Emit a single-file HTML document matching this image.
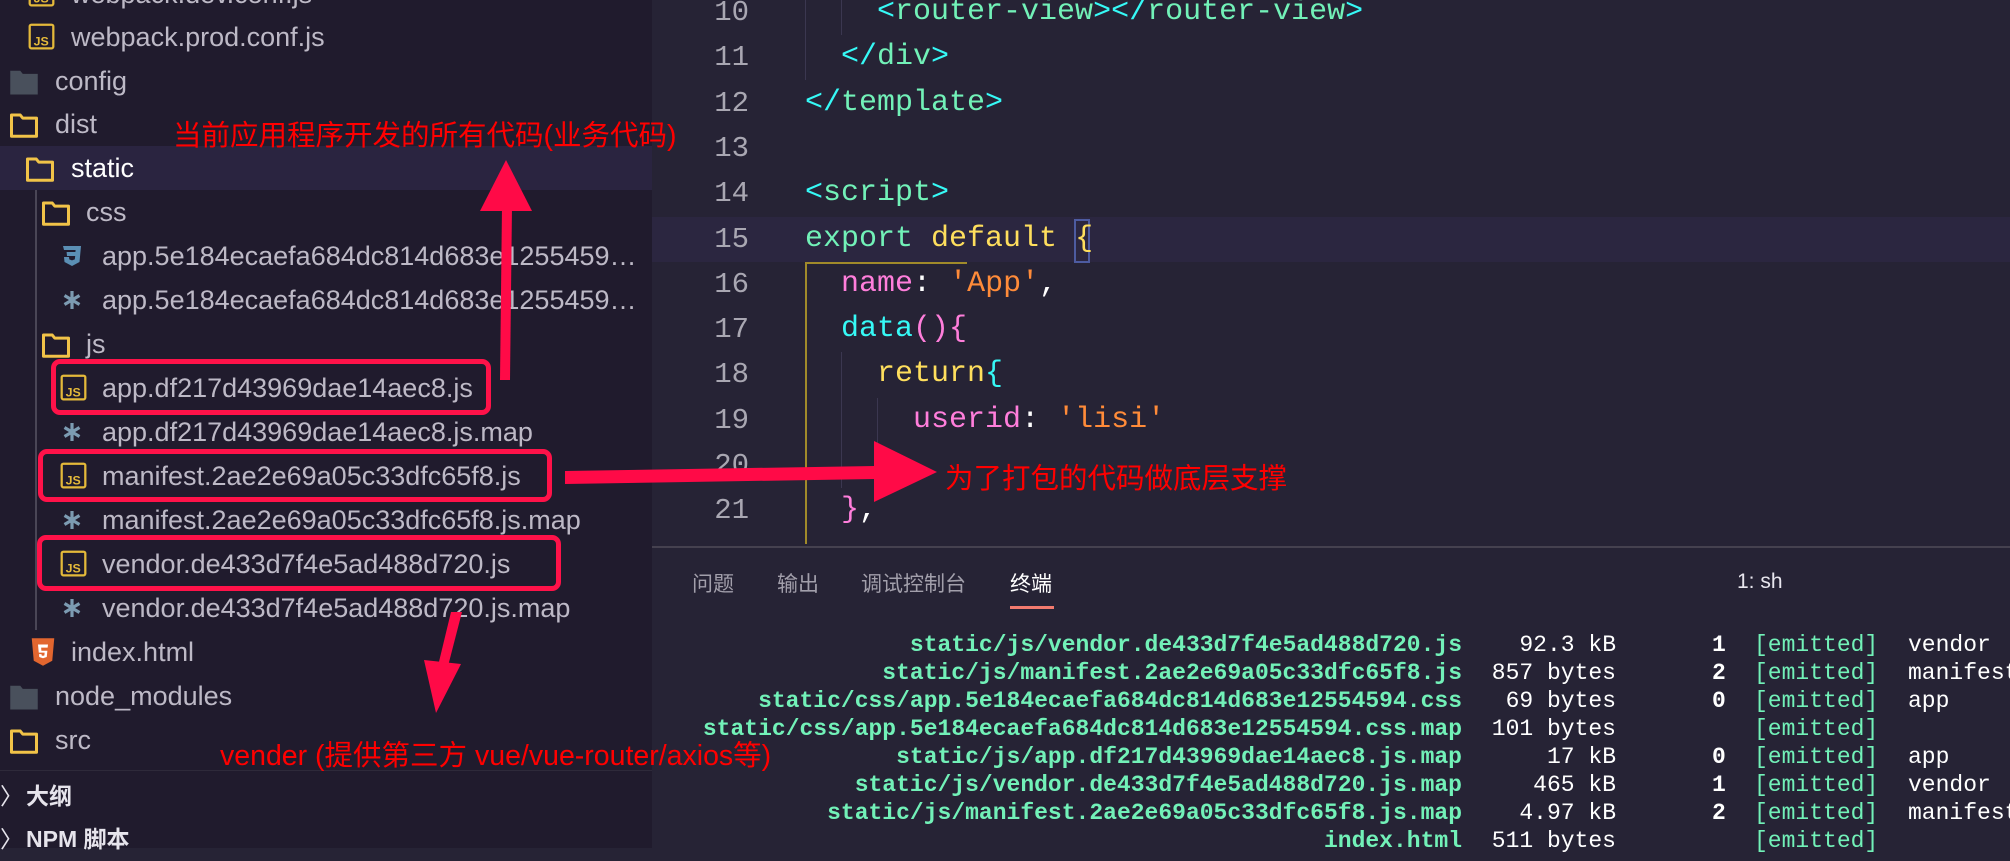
<!DOCTYPE html>
<html><head><meta charset="utf-8"><style>
*{margin:0;padding:0;box-sizing:border-box}
body{width:2010px;height:848px;overflow:hidden;background:#262335;position:relative;font-family:"Liberation Sans","Noto Sans CJK SC",sans-serif}
.sb{position:absolute;left:0;top:0;width:652px;height:848px;background:#201b2d}
.row{position:absolute;left:0;width:652px;height:44px;line-height:44px;font-size:27px;color:#bdb9c6;white-space:nowrap}
.row span.t{position:absolute;top:0}
.ic{position:absolute;top:8px}
.ln{position:absolute;left:652px;width:97px;text-align:right;font-family:"Liberation Mono",monospace;font-size:29px;color:#a9a7b2;line-height:45px;height:45px}
.cl{position:absolute;left:805px;font-family:"Liberation Mono",monospace;font-size:30px;line-height:45px;height:45px;white-space:pre;color:#72f1b8}
.term{position:absolute;font-family:"Liberation Mono",monospace;font-size:23px;font-weight:bold;line-height:28px;white-space:pre}
.red{position:absolute;color:#ff0000;font-size:28.5px;white-space:nowrap;font-family:"Liberation Sans","Noto Sans CJK SC",sans-serif}
.box{position:absolute;border:5px solid #ff1249;border-radius:9px}
.ell{overflow:hidden;text-overflow:ellipsis;width:543px}
</style></head><body>
<div class="sb"></div>
<div style="position:absolute;left:0;top:146px;width:652px;height:44px;background:#2a2440"></div>
<div style="position:absolute;left:35px;top:190px;width:2px;height:440px;background:#4a4656"></div>

<svg width="0" height="0" style="position:absolute">
<defs>
<symbol id="js" viewBox="0 0 24 24"><rect x="1.5" y="1.5" width="21" height="21" rx="1.5" fill="none" stroke="#e4b93a" stroke-width="2"/><text x="5" y="20" font-family="Liberation Sans" font-size="11" font-weight="bold" fill="#e4b93a">JS</text></symbol>
<symbol id="fo" viewBox="0 0 24 24"><path d="M2 4h7l2 2.5h11V21H2z" fill="none" stroke="#f1c348" stroke-width="2.4" stroke-linejoin="round"/></symbol>
<symbol id="fg" viewBox="0 0 24 24"><path d="M1 3h8l2 2.5h12V22H1z" fill="#49505c"/></symbol>
<symbol id="as" viewBox="0 0 24 24"><path d="M12 3v18M4.5 7.5l15 9M19.5 7.5l-15 9" stroke="#7c9bb2" stroke-width="3.2"/></symbol>
</defs></svg>

<div class="row" style="top:-28px"><svg class="ic" style="left:28px" width="27" height="27"><use href="#js"/></svg><span class="t" style="left:71px">webpack.dev.conf.js</span></div>
<div class="row" style="top:15px"><svg class="ic" style="left:28px" width="27" height="27"><use href="#js"/></svg><span class="t" style="left:71px">webpack.prod.conf.js</span></div>
<div class="row" style="top:59px"><svg class="ic" style="left:9px" width="30" height="30"><use href="#fg"/></svg><span class="t" style="left:55px">config</span></div>
<div class="row" style="top:102px"><svg class="ic" style="left:9px" width="30" height="30"><use href="#fo"/></svg><span class="t" style="left:55px">dist</span></div>
<div class="row" style="top:146px;color:#fff"><svg class="ic" style="left:25px" width="30" height="30"><use href="#fo"/></svg><span class="t" style="left:71px">static</span></div>
<div class="row" style="top:190px"><svg class="ic" style="left:41px" width="30" height="30"><use href="#fo"/></svg><span class="t" style="left:86px">css</span></div>
<div class="row" style="top:234px"><svg class="ic" style="left:60px;top:10px" width="24" height="24" viewBox="0 0 24 24"><path d="M3 2h18l-1.5 16L12 22l-7.5-4L4 13h5l.3 2.4 2.7 1 2.8-1 .4-3.4H7L6.6 8h8.8l.2-2H4z" fill="#5b8fb4"/></svg><span class="t ell" style="left:102px">app.5e184ecaefa684dc814d683e12554594.css</span></div>
<div class="row" style="top:278px"><svg class="ic" style="left:60px;top:10px" width="24" height="24"><use href="#as"/></svg><span class="t ell" style="left:102px">app.5e184ecaefa684dc814d683e12554594.css.map</span></div>
<div class="row" style="top:322px"><svg class="ic" style="left:41px" width="30" height="30"><use href="#fo"/></svg><span class="t" style="left:86px">js</span></div>
<div class="row" style="top:366px"><svg class="ic" style="left:60px" width="27" height="27"><use href="#js"/></svg><span class="t" style="left:102px">app.df217d43969dae14aec8.js</span></div>
<div class="row" style="top:410px"><svg class="ic" style="left:60px;top:10px" width="24" height="24"><use href="#as"/></svg><span class="t" style="left:102px">app.df217d43969dae14aec8.js.map</span></div>
<div class="row" style="top:454px"><svg class="ic" style="left:60px" width="27" height="27"><use href="#js"/></svg><span class="t" style="left:102px">manifest.2ae2e69a05c33dfc65f8.js</span></div>
<div class="row" style="top:498px"><svg class="ic" style="left:60px;top:10px" width="24" height="24"><use href="#as"/></svg><span class="t" style="left:102px">manifest.2ae2e69a05c33dfc65f8.js.map</span></div>
<div class="row" style="top:542px"><svg class="ic" style="left:60px" width="27" height="27"><use href="#js"/></svg><span class="t" style="left:102px">vendor.de433d7f4e5ad488d720.js</span></div>
<div class="row" style="top:586px"><svg class="ic" style="left:60px;top:10px" width="24" height="24"><use href="#as"/></svg><span class="t" style="left:102px">vendor.de433d7f4e5ad488d720.js.map</span></div>
<div class="row" style="top:630px"><svg class="ic" style="left:28px;top:6px" width="30" height="32" viewBox="0 0 24 24"><path d="M3 1h18l-1.6 18L12 23l-7.4-4z" fill="#e2662f"/><path d="M8 6h8l-.3 2.5H10.5l.2 2.5h4.8l-.5 5-3 1-3-1-.2-2.3h2l.1 1 1.1.4 1.1-.4.2-2.2H8.6z" fill="#fff"/></svg><span class="t" style="left:71px">index.html</span></div>
<div class="row" style="top:674px"><svg class="ic" style="left:9px" width="30" height="30"><use href="#fg"/></svg><span class="t" style="left:55px">node_modules</span></div>
<div class="row" style="top:718px"><svg class="ic" style="left:9px" width="30" height="30"><use href="#fo"/></svg><span class="t" style="left:55px">src</span></div>
<div style="position:absolute;left:0;top:770px;width:652px;height:1px;background:#2e2a3a"></div>
<div class="row" style="top:774px;color:#e6e4ec;font-weight:bold;font-size:23px"><span class="t" style="left:0px;font-weight:normal">〉</span><span class="t" style="left:26px">大纲</span></div>
<div class="row" style="top:817px;color:#e6e4ec;font-weight:bold;font-size:23px"><span class="t" style="left:0px;font-weight:normal">〉</span><span class="t" style="left:26px">NPM 脚本</span></div>

<!-- editor -->
<div style="position:absolute;left:652px;top:217px;width:1358px;height:45px;background:#2b2640"></div>
<div class="ln" style="top:-10px">10</div>
<div class="ln" style="top:35px">11</div>
<div class="ln" style="top:81px">12</div>
<div class="ln" style="top:126px">13</div>
<div class="ln" style="top:171px">14</div>
<div class="ln" style="top:217px">15</div>
<div class="ln" style="top:262px">16</div>
<div class="ln" style="top:307px">17</div>
<div class="ln" style="top:352px">18</div>
<div class="ln" style="top:398px">19</div>
<div class="ln" style="top:443px">20</div>
<div class="ln" style="top:488px">21</div>
<div style="position:absolute;left:805px;top:0;width:1px;height:80px;background:#3b3750"></div>
<div style="position:absolute;left:841px;top:0;width:1px;height:35px;background:#3b3750"></div>
<div style="position:absolute;left:841px;top:352px;width:1px;height:136px;background:#3b3750"></div>
<div style="position:absolute;left:877px;top:398px;width:1px;height:45px;background:#3b3750"></div>
<div style="position:absolute;left:805px;top:262px;width:2px;height:282px;background:#a08a2a"></div>
<div style="position:absolute;left:805px;top:262px;width:162px;height:2px;background:#a08a2a"></div>
<div style="position:absolute;left:1074px;top:219px;width:16px;height:44px;border:2px solid #4d5ba0"></div>
<div class="cl" style="top:-10px">    <span style="color:#36f9f6">&lt;</span>router-view<span style="color:#36f9f6">&gt;&lt;/</span>router-view<span style="color:#36f9f6">&gt;</span></div>
<div class="cl" style="top:35px">  <span style="color:#36f9f6">&lt;/</span>div<span style="color:#36f9f6">&gt;</span></div>
<div class="cl" style="top:81px"><span style="color:#36f9f6">&lt;/</span>template<span style="color:#36f9f6">&gt;</span></div>
<div class="cl" style="top:171px"><span style="color:#36f9f6">&lt;</span>script<span style="color:#36f9f6">&gt;</span></div>
<div class="cl" style="top:217px">export <span style="color:#fede5d">default</span> <span style="color:#fede5d">{</span></div>
<div class="cl" style="top:262px">  <span style="color:#ff7edb">name</span><span style="color:#fff">:</span> <span style="color:#ff8b39">'App'</span><span style="color:#fff">,</span></div>
<div class="cl" style="top:307px">  <span style="color:#36f9f6">data</span><span style="color:#ff7edb">(){</span></div>
<div class="cl" style="top:352px">    <span style="color:#fede5d">return</span><span style="color:#36f9f6">{</span></div>
<div class="cl" style="top:398px">      <span style="color:#ff7edb">userid</span><span style="color:#fff">:</span> <span style="color:#ff8b39">'lisi'</span></div>
<div class="cl" style="top:443px">    <span style="color:#36f9f6">}</span></div>
<div class="cl" style="top:488px">  <span style="color:#ff7edb">}</span><span style="color:#fff">,</span></div>

<!-- panel -->
<div style="position:absolute;left:652px;top:546px;width:1358px;height:302px;background:#262335;border-top:2px solid #45414f"></div>
<div style="position:absolute;top:568px;left:692px;font-size:21px;color:#a29fab;white-space:nowrap">问题</div>
<div style="position:absolute;top:568px;left:777px;font-size:21px;color:#a29fab">输出</div>
<div style="position:absolute;top:568px;left:861px;font-size:21px;color:#a29fab">调试控制台</div>
<div style="position:absolute;top:568px;left:1010px;font-size:21px;color:#fff">终端</div>
<div style="position:absolute;top:606px;left:1010px;width:44px;height:3px;background:#f27a6e"></div>
<div style="position:absolute;top:570px;left:1737px;font-size:21px;color:#e8e6ee">1: sh</div>

<div class="term" style="left:660px;top:631px;width:802px;text-align:right;color:#72f1b8">static/js/vendor.de433d7f4e5ad488d720.js
static/js/manifest.2ae2e69a05c33dfc65f8.js
static/css/app.5e184ecaefa684dc814d683e12554594.css
static/css/app.5e184ecaefa684dc814d683e12554594.css.map
static/js/app.df217d43969dae14aec8.js.map
static/js/vendor.de433d7f4e5ad488d720.js.map
static/js/manifest.2ae2e69a05c33dfc65f8.js.map
index.html</div>
<div class="term" style="left:1470px;top:631px;width:146px;text-align:right;color:#fff;font-weight:normal">92.3 kB
857 bytes
69 bytes
101 bytes
17 kB
465 kB
4.97 kB
511 bytes</div>
<div class="term" style="left:1712px;top:631px;color:#fff">1
2
0

0
1
2
</div>
<div class="term" style="left:1754px;top:631px;color:#72f1b8;font-weight:normal">[emitted]
[emitted]
[emitted]
[emitted]
[emitted]
[emitted]
[emitted]
[emitted]</div>
<div class="term" style="left:1908px;top:631px;color:#fff;font-weight:normal">vendor
manifest
app

app
vendor
manifest
</div>

<div class="box" style="left:51px;top:359px;width:440px;height:56px"></div>
<div class="box" style="left:38px;top:449px;width:514px;height:53px"></div>
<div class="box" style="left:37px;top:535px;width:524px;height:56px"></div>
<svg style="position:absolute;left:0;top:0" width="2010" height="848">
<path d="M500 380 L502 206 L512 206 L510 380 Z" fill="#ff0a47"/>
<path d="M506 160 L532 211 L480 211 Z" fill="#ff0a47"/>
<path d="M565 471 L875 466 L875 479 L565 484 Z" fill="#ff0a47"/>
<path d="M937 472 L874 441 L874 502 Z" fill="#ff0a47"/>
<path d="M451 612 L462 612 L447 670 L437 670 Z" fill="#ff0a47"/>
<path d="M436 713 L424 660 L461 664 Z" fill="#ff0a47"/>
</svg>
<div class="red" style="left:173px;top:113px">当前应用程序开发的所有代码(业务代码)</div>
<div class="red" style="left:945px;top:456px">为了打包的代码做底层支撑</div>
<div class="red" style="left:220px;top:733px">vender (提供第三方 vue/vue-router/axios等)</div>
</body></html>
